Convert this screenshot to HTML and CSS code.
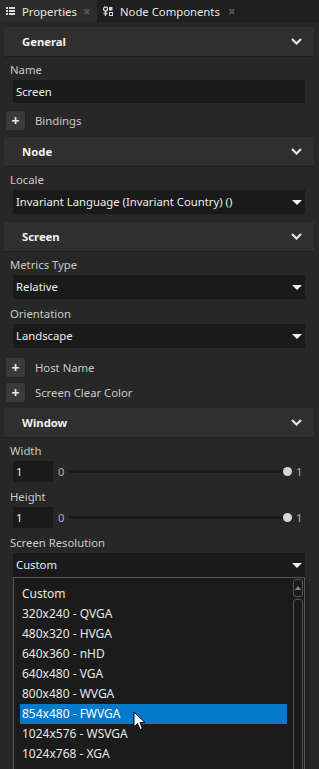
FILE: index.html
```html
<!DOCTYPE html>
<html lang="en">
<head>
    <meta charset="UTF-8">
    <meta name="viewport" content="width=device-width, initial-scale=1.0">
    <title>Properties</title>
    <link rel="stylesheet" href="styles.css">
</head>
<body>
    <div class="tabs">
        <div class="tab active">
            <svg class="tab-icon" width="9" height="8" viewBox="0 0 9 8">
                <rect x="0" y="0" width="2" height="2" fill="#d8d8d8"/>
                <rect x="3" y="0" width="6" height="2" fill="#d8d8d8"/>
                <rect x="0" y="3" width="2" height="2" fill="#d8d8d8"/>
                <rect x="3" y="3" width="6" height="2" fill="#d8d8d8"/>
                <rect x="0" y="6" width="2" height="2" fill="#d8d8d8"/>
                <rect x="3" y="6" width="6" height="2" fill="#d8d8d8"/>
            </svg>
            <span class="tab-title">Properties</span>
            <span class="tab-close">✖</span>
        </div>
        <div class="tab">
            <svg class="tab-icon" width="10" height="11" viewBox="0 0 10 11">
                <circle cx="2.5" cy="3" r="2" fill="none" stroke="#d8d8d8" stroke-width="1.3"/>
                <line x1="2.5" y1="5" x2="2.5" y2="10" stroke="#d8d8d8" stroke-width="1.3"/>
                <line x1="0.5" y1="7.5" x2="4.5" y2="7.5" stroke="#d8d8d8" stroke-width="1.3"/>
                <rect x="6" y="1" width="3.5" height="3.5" fill="#d8d8d8"/>
                <rect x="6.5" y="6.5" width="3" height="3" fill="none" stroke="#d8d8d8" stroke-width="1"/>
            </svg>
            <span class="tab-title">Node Components</span>
            <span class="tab-close">✖</span>
        </div>
    </div>

    <div class="panel">
        <div class="section-header">
            <span>General</span>
            <svg class="chevron" width="11" height="7" viewBox="0 0 11 7"><polyline points="1,1 5.5,5.5 10,1" fill="none" stroke="#e6e6e6" stroke-width="2.2"/></svg>
        </div>
        <div class="field">
            <label class="field-label">Name</label>
            <div class="text-input">Screen</div>
        </div>
        <div class="add-row first">
            <span class="add-btn">+</span>
            <span class="add-label">Bindings</span>
        </div>

        <div class="section-header">
            <span>Node</span>
            <svg class="chevron" width="11" height="7" viewBox="0 0 11 7"><polyline points="1,1 5.5,5.5 10,1" fill="none" stroke="#e6e6e6" stroke-width="2.2"/></svg>
        </div>
        <div class="field">
            <label class="field-label">Locale</label>
            <div class="select">
                <span>Invariant Language (Invariant Country) ()</span>
                <span class="arrow"></span>
            </div>
        </div>

        <div class="section-header spaced">
            <span>Screen</span>
            <svg class="chevron" width="11" height="7" viewBox="0 0 11 7"><polyline points="1,1 5.5,5.5 10,1" fill="none" stroke="#e6e6e6" stroke-width="2.2"/></svg>
        </div>
        <div class="field">
            <label class="field-label">Metrics Type</label>
            <div class="select">
                <span>Relative</span>
                <span class="arrow"></span>
            </div>
        </div>
        <div class="field">
            <label class="field-label">Orientation</label>
            <div class="select">
                <span>Landscape</span>
                <span class="arrow"></span>
            </div>
        </div>
        <div class="add-row second">
            <span class="add-btn">+</span>
            <span class="add-label">Host Name</span>
        </div>
        <div class="add-row last">
            <span class="add-btn">+</span>
            <span class="add-label">Screen Clear Color</span>
        </div>

        <div class="section-header">
            <span>Window</span>
            <svg class="chevron" width="11" height="7" viewBox="0 0 11 7"><polyline points="1,1 5.5,5.5 10,1" fill="none" stroke="#e6e6e6" stroke-width="2.2"/></svg>
        </div>
        <div class="field">
            <label class="field-label">Width</label>
            <div class="slider-row">
                <div class="num-input">1</div>
                <span class="range-min">0</span>
                <div class="track"><span class="knob"></span></div>
                <span class="range-max">1</span>
            </div>
        </div>
        <div class="field">
            <label class="field-label">Height</label>
            <div class="slider-row">
                <div class="num-input">1</div>
                <span class="range-min">0</span>
                <div class="track"><span class="knob"></span></div>
                <span class="range-max">1</span>
            </div>
        </div>
        <div class="field">
            <label class="field-label">Screen Resolution</label>
            <div class="select open">
                <span>Custom</span>
                <span class="arrow"></span>
                <div class="popup">
                    <ul class="options">
                        <li>Custom</li>
                        <li>320x240 - QVGA</li>
                        <li>480x320 - HVGA</li>
                        <li>640x360 - nHD</li>
                        <li>640x480 - VGA</li>
                        <li>800x480 - WVGA</li>
                        <li class="selected">854x480 - FWVGA</li>
                        <li>1024x576 - WSVGA</li>
                        <li>1024x768 - XGA</li>
                    </ul>
                    <div class="scrollbar">
                        <div class="scroll-up"></div>
                        <div class="scroll-track"></div>
                    </div>
                    <svg class="cursor" width="13" height="20" viewBox="0 0 13 20">
                        <path d="M1 1 L1 16 L4.5 12.5 L7 18.5 L9.5 17.5 L7 11.5 L12 11.5 Z" fill="#ffffff" stroke="#000000" stroke-width="1"/>
                    </svg>
                </div>
            </div>
        </div>
    </div>
</body>
</html>
```

FILE: styles.css
```css
* {
    margin: 0;
    padding: 0;
    box-sizing: border-box;
}

html, body {
    height: 100%;
}

body {
    font-family: "Noto Sans", "Open Sans", sans-serif;
    font-size: 11.3px;
    color: #e6e6e6;
    background: #272727;
    overflow: hidden;
}

/* tab strip */
.tabs {
    display: flex;
    height: 22px;
    background: #1e1e1e;
}

.tab {
    display: flex;
    align-items: center;
    height: 22px;
    padding: 0 10px 0 6px;
}

.tab.active {
    background: #2c2c2c;
    width: 97px;
    padding-right: 6px;
}

.tab-icon {
    flex: none;
    margin-right: 7px;
}

.tab .tab-title {
    color: #e6e6e6;
    white-space: nowrap;
}

.tab-close {
    color: #555;
    font-size: 9px;
    margin-left: 8px;
}

.tab.active .tab-close {
    margin-left: auto;
}

/* panel */
.panel {
    display: flex;
    flex-direction: column;
    padding: 5px 5px 0 4px;
}

.section-header {
    display: flex;
    align-items: center;
    justify-content: space-between;
    flex: none;
    height: 30px;
    padding: 0 12px 0 18px;
    background: #2f2f2f;
    border-bottom: 1px solid #1f1f1f;
    font-weight: 700;
    color: #f2f2f2;
    margin-bottom: 2px;
}

.section-header.spaced {
    margin-top: 4px;
}

.field {
    margin-bottom: 4px;
}

.field-label {
    display: block;
    height: 21px;
    line-height: 21px;
    padding-left: 6px;
    color: #c9c9c9;
}

.text-input,
.select {
    margin: 0 9px;
    height: 23px;
    line-height: 23px;
    padding-left: 3px;
    background: #1a1a1a;
    color: #ececec;
}

.select {
    position: relative;
    display: flex;
    justify-content: space-between;
    align-items: center;
    height: 24px;
    line-height: 24px;
    white-space: nowrap;
}

.arrow {
    flex: none;
    width: 0;
    height: 0;
    margin-right: 3px;
    border-left: 5px solid transparent;
    border-right: 5px solid transparent;
    border-top: 5px solid #f0f0f0;
}

.add-row {
    display: flex;
    align-items: center;
    height: 21px;
    margin: 0 0 0 1px;
}

.add-row.first {
    margin-top: 3px;
    margin-bottom: 6px;
}

.add-row.second {
    margin-top: 5px;
}

.add-row.last {
    margin-top: 4px;
    margin-bottom: 5px;
}

.add-btn {
    width: 21px;
    height: 21px;
    line-height: 19px;
    text-align: center;
    background: #3a3a3a;
    border: 1px solid #242424;
    border-radius: 3px;
    color: #e6e6e6;
    font-weight: 700;
    font-size: 14px;
}

.add-label {
    margin-left: 9px;
    color: #c9c9c9;
}

/* sliders */
.slider-row {
    display: flex;
    align-items: center;
    height: 21px;
    margin: 0 9px;
}

.num-input {
    width: 40px;
    height: 21px;
    line-height: 21px;
    padding-left: 3px;
    background: #1a1a1a;
    color: #ececec;
}

.range-min {
    margin-left: 5px;
    width: 11px;
    color: #a8b0b8;
}

.track {
    position: relative;
    flex: 1;
    height: 3px;
    margin-right: 9px;
    background: #1a1a1a;
}

.knob {
    position: absolute;
    right: -5px;
    top: -3px;
    width: 9px;
    height: 9px;
    border-radius: 50%;
    background: #d6d6d6;
}

.range-max {
    width: 9px;
    color: #a8b0b8;
}

/* open dropdown */
.popup {
    position: absolute;
    top: 100%;
    left: 0;
    right: 0;
    height: 200px;
    display: flex;
    background: #1b1b1b;
    border: 1px solid #555;
    border-bottom: none;
    box-shadow: 2px 2px 4px rgba(0, 0, 0, 0.3);
    line-height: 20px;
    font-size: 12px;
}

.options {
    list-style: none;
    flex: 1;
    padding: 6px 6px 0 6px;
}

.options li {
    height: 20px;
    padding-left: 2px;
    color: #e8e8e8;
}

.options li.selected {
    background: #0679c9;
    color: #ffffff;
}

.scrollbar {
    display: flex;
    flex-direction: column;
    width: 10px;
    margin: 1px 1px 0 0;
    gap: 2px;
}

.scroll-up {
    position: relative;
    height: 18px;
    border: 1px solid #555;
    border-radius: 3px;
}

.scroll-up::after {
    content: "";
    position: absolute;
    left: 1px;
    top: 6px;
    border-left: 3px solid transparent;
    border-right: 3px solid transparent;
    border-bottom: 4px solid #8a8a8a;
}

.scroll-track {
    flex: 1;
    border: 1px solid #555;
    border-radius: 3px;
}

.cursor {
    position: absolute;
    left: 119px;
    top: 133px;
}
```
